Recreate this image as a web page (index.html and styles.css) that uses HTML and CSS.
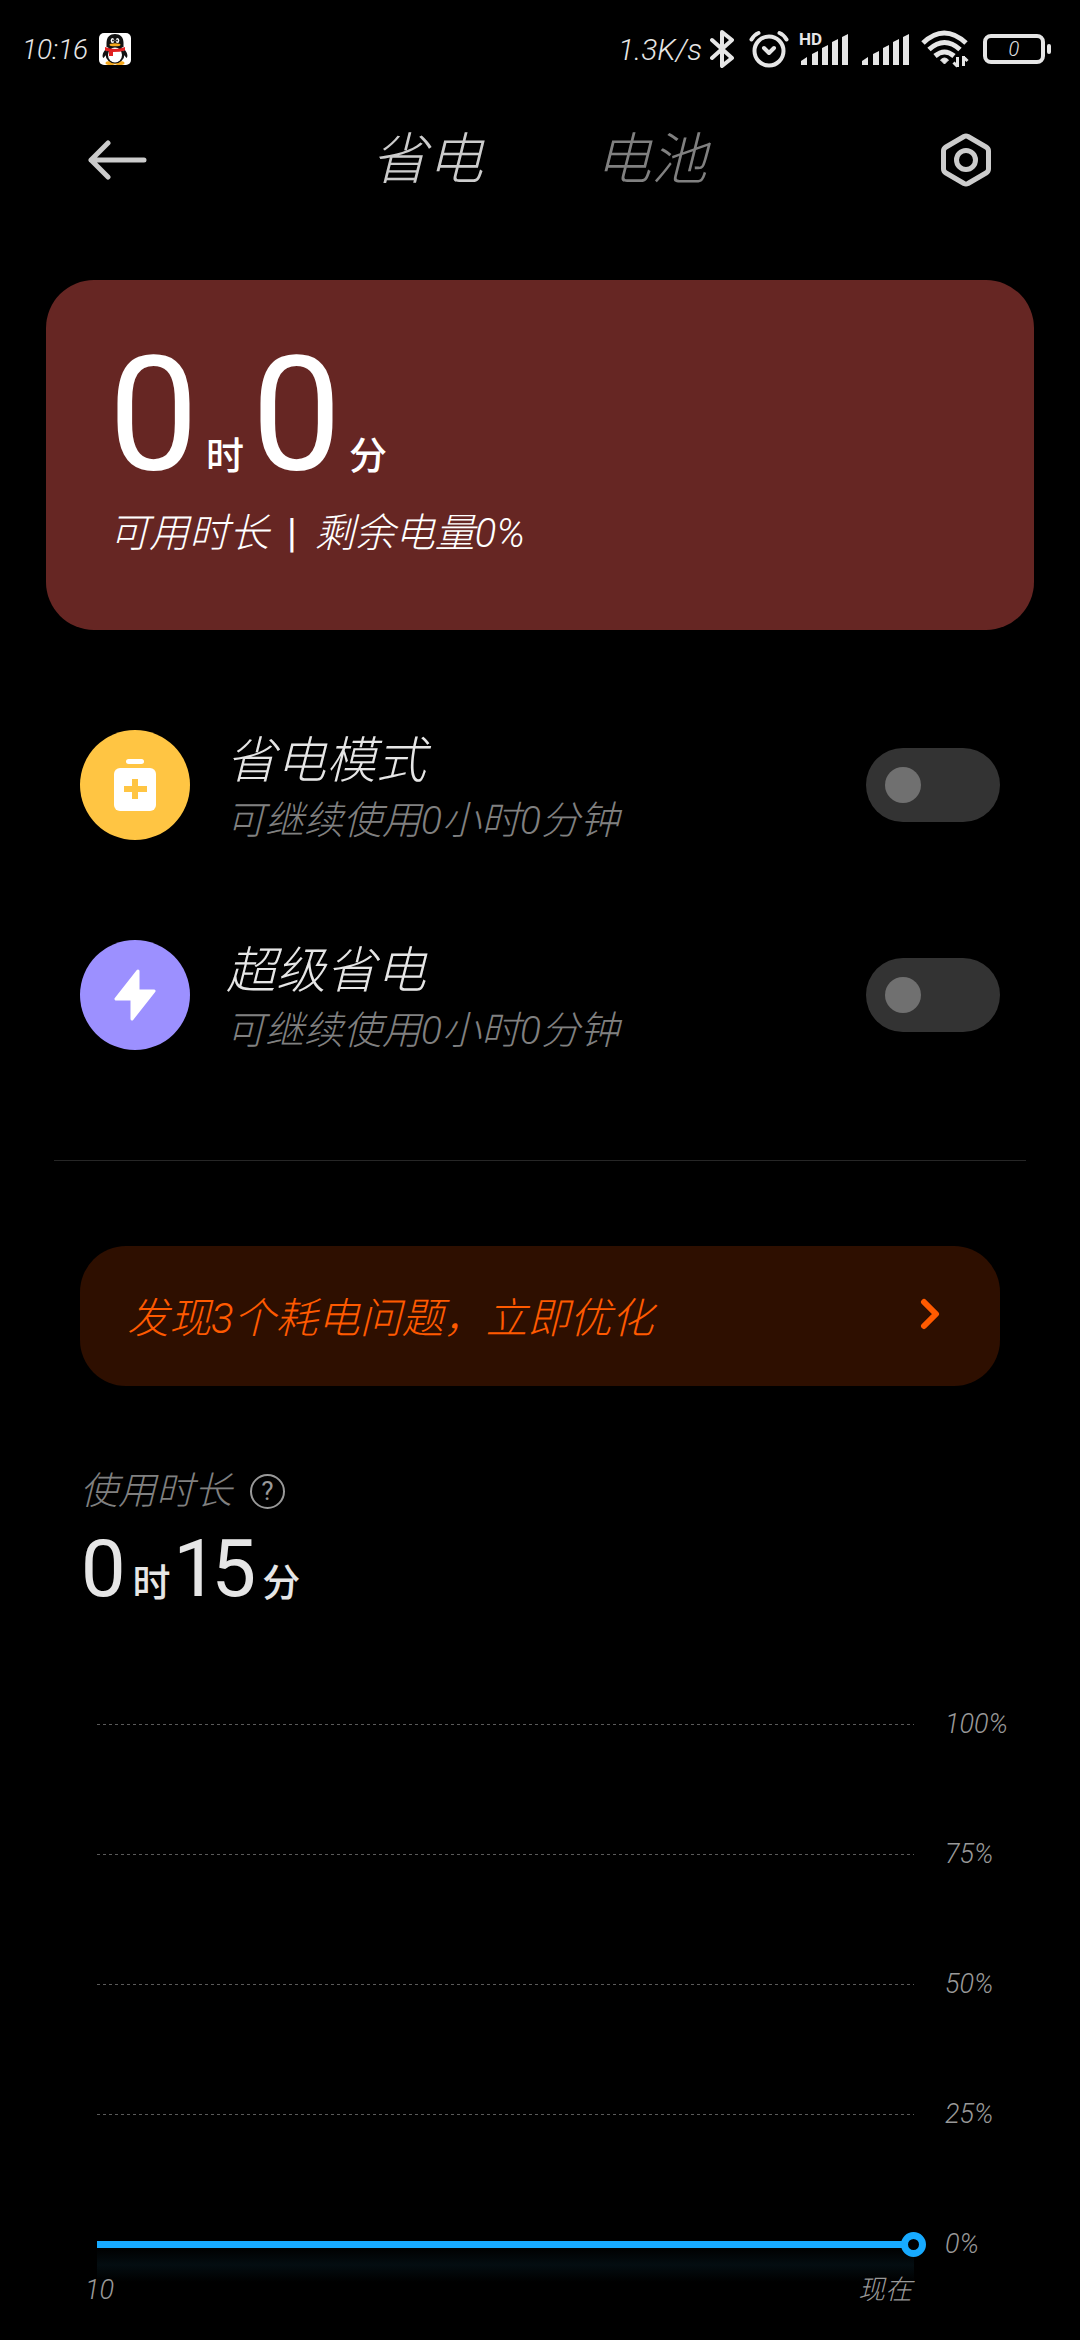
FILE: index.html
```html
<!DOCTYPE html>
<html lang="zh-CN">
<head>
    <meta charset="UTF-8">
    <meta name="viewport" content="width=device-width, initial-scale=1.0">
    <title>省电</title>
    <link rel="stylesheet" href="styles.css">
</head>
<body>
    <div class="status-bar">
        <div class="status-left">
            <span class="clock">10:16</span>
            <svg width="32" height="32" viewBox="0 0 32 32">
                <rect width="32" height="32" rx="5" fill="#fff"/>
                <ellipse cx="11.500" cy="30" rx="5" ry="2" fill="#f5a81c"/>
                <ellipse cx="20.500" cy="30" rx="5" ry="2" fill="#f5a81c"/>
                <path d="M7 16C3 20 3 24 4.500 25L7 22zM25 16C29 20 29 24 27.500 25L25 22z" fill="#111"/>
                <ellipse cx="16" cy="21" rx="9.500" ry="9.500" fill="#111"/>
                <ellipse cx="16" cy="22" rx="7" ry="7.500" fill="#fff"/>
                <path d="M7.500 14V10C7.500 4 11 1 16 1s8.500 3 8.500 9v4z" fill="#111"/>
                <ellipse cx="13.500" cy="7.500" rx="1.800" ry="2.600" fill="#fff"/>
                <ellipse cx="18.500" cy="7.500" rx="1.800" ry="2.600" fill="#fff"/>
                <circle cx="14" cy="7.500" r="0.900" fill="#111"/>
                <circle cx="18" cy="7.500" r="0.900" fill="#111"/>
                <ellipse cx="16" cy="11.700" rx="5.500" ry="1.500" fill="#f5a81c"/>
                <path d="M6 14q10 4 20 0v3.500q-5 1.500-12 1.500v4h-4v-4.500l-4-1z" fill="#e02020"/>
            </svg>
        </div>
        <div class="status-right">
            <span>1.3K/s</span>
            <svg class="bluetooth" width="24" height="38" viewBox="0 0 24 38" fill="none" stroke="#e6e6e6" stroke-width="4" stroke-linecap="round" stroke-linejoin="round">
                <path d="M2 10l20 18-10 8V2l10 8L2 28"/>
            </svg>
            <svg class="alarm" width="40" height="38" viewBox="0 0 40 38" fill="none" stroke="#e6e6e6" stroke-width="4" stroke-linecap="round" stroke-linejoin="round">
                <circle cx="20" cy="21" r="14.500"/>
                <path d="M15 18l5 5 5-5"/>
                <path d="M2.500 9.500q3-5 7-6.500M37.500 9.500q-3-5-7-6.500"/>
            </svg>
            <svg class="signal-one" width="50" height="46" viewBox="0 -6 50 46" fill="#e6e6e6">
                <text class="hd" x="0" y="13">HD</text>
                <path d="M2 33v-4l6-4v8zM13 33V22l6-3v14zM23 33V16l6-3v20zM33 33V10l6-3v26zM43 33V5l6-3v31z"/>
            </svg>
            <svg class="signal-two" width="50" height="34" viewBox="0 0 50 34" fill="#e6e6e6">
                <path d="M1 33v-4l6-4v8zM12 33V22l6-3v14zM22 33V16l6-3v20zM32 33V10l6-3v26zM42 33V5l6-3v31z"/>
            </svg>
            <svg class="wifi" width="48" height="38" viewBox="0 0 48 38" fill="none" stroke="#e6e6e6" stroke-width="5">
                <path d="M2 13q21-20 43 0"/>
                <path d="M8 19.500q15.500-14 31 0"/>
                <path d="M14 26q9.500-8 19 0"/>
                <path d="M23.500 34l-4-4q4-4 8 0z" fill="#e6e6e6" stroke-width="1"/>
                <path d="M36.500 27v10M42.500 26v10M32.500 32.500l4 4M42.500 27l4 4" stroke-width="3"/>
            </svg>
            <div class="battery"><span>0</span></div>
        </div>
    </div>

    <header class="top-bar">
        <button class="icon-button" type="button" aria-label="返回">
            <svg width="60" height="42" viewBox="0 0 60 42" fill="none" stroke="#ccc" stroke-width="5" stroke-linecap="round" stroke-linejoin="round">
                <path d="M20 4L3 21l17 17M3 21h53"/>
            </svg>
        </button>
        <nav class="tabs">
            <button class="tab active" type="button">省电</button>
            <button class="tab" type="button">电池</button>
        </nav>
        <button class="icon-button" type="button" aria-label="设置">
            <svg width="52" height="56" viewBox="0 0 52 56" fill="none" stroke="#ccc" stroke-width="5" stroke-linejoin="round">
                <path d="M24 4.500q2-1 4 0l18 10.500q2.500 1.500 2.500 4v18q0 2.500-2.500 4L28 51.500q-2 1-4 0L6 41q-2.500-1.500-2.500-4V19q0-2.500 2.500-4z"/>
                <circle cx="26" cy="28" r="9.500"/>
            </svg>
        </button>
    </header>

    <main>
        <section class="summary">
            <div class="duration duration-large">
                <span class="number">0</span><span class="unit">时</span><span class="number">0</span><span class="unit">分</span>
            </div>
            <p class="remaining">可用时长<span class="bar">|</span>剩余电量0%</p>
        </section>

        <section class="modes">
            <div class="mode">
                <svg width="110" height="110" viewBox="0 0 110 110">
                    <circle cx="55" cy="55" r="55" fill="#ffc543"/>
                    <rect x="46" y="29" width="18" height="5" rx="2.500" fill="#fff"/>
                    <rect x="34" y="38" width="42" height="43" rx="6" fill="#fff"/>
                    <path d="M55 49v20M44 59h23" stroke="#ffc543" stroke-width="6"/>
                </svg>
                <label class="mode-text" for="saver">
                    <span class="mode-title">省电模式</span>
                    <span class="mode-note">可继续使用0小时0分钟</span>
                </label>
                <input class="switch" type="checkbox" id="saver">
            </div>
            <div class="mode">
                <svg width="110" height="110" viewBox="0 0 110 110">
                    <circle cx="55" cy="55" r="55" fill="#9c90ff"/>
                    <path d="M58 31L36 59h16v20l22-28H58z" fill="#fff" stroke="#fff" stroke-width="3" stroke-linejoin="round"/>
                </svg>
                <label class="mode-text" for="ultra">
                    <span class="mode-title">超级省电</span>
                    <span class="mode-note">可继续使用0小时0分钟</span>
                </label>
                <input class="switch" type="checkbox" id="ultra">
            </div>
        </section>

        <section class="usage">
            <button class="issues" type="button">
                <span>发现3个耗电问题，立即优化</span>
                <svg width="20" height="32" viewBox="0 0 20 32" fill="none" stroke="#ff5a00" stroke-width="6" stroke-linecap="round" stroke-linejoin="round">
                    <path d="M4 4l12 12L4 28"/>
                </svg>
            </button>

            <div class="usage-head">
                <h2>使用时长</h2>
                <button class="help" type="button" aria-label="说明">?</button>
            </div>
            <div class="duration">
                <span class="number">0</span><span class="unit">时</span><span class="number">15</span><span class="unit">分</span>
            </div>

            <div class="chart">
                <div class="level"><i></i><span>100%</span></div>
                <div class="level"><i></i><span>75%</span></div>
                <div class="level"><i></i><span>50%</span></div>
                <div class="level"><i></i><span>25%</span></div>
                <div class="level current"><i></i><span>0%</span></div>
            </div>
            <div class="times">
                <span>10</span>
                <span>现在</span>
            </div>
        </section>
    </main>
</body>
</html>
```
FILE: styles.css
```css
*, *::before, *::after { box-sizing: border-box; }
body {
    margin: 0;
    background: #000;
    color: #e6e6e6;
    font-family: Roboto, "Noto Sans CJK SC", sans-serif;
    font-style: italic;
    font-weight: 300;
}
button { padding: 0; border: none; background: none; color: inherit; font: inherit; cursor: pointer; }
h2, p { margin: 0; font-weight: inherit; }
svg { display: block; flex-shrink: 0; }

/* status bar */
.status-bar { display: flex; justify-content: space-between; align-items: center; height: 98px; padding: 0 30px 0 22px; font-size: 30px; }
.status-left, .status-right { display: flex; align-items: center; }
.status-left { gap: 11px; }
.clock { font-size: 28px; }
.bluetooth { margin-left: 8px; }
.alarm { margin-left: 15px; }
.signal-one { margin-left: 10px; }
.signal-two { margin-left: 12px; }
.wifi { margin-left: 10px; }
.hd { font-size: 17px; font-weight: 700; font-style: normal; }
.battery { position: relative; display: flex; align-items: center; justify-content: center; width: 62px; height: 30px; margin: 0 5px 0 14px; border: 4px solid #e6e6e6; border-radius: 8px; font-size: 20px; }
.battery::after { content: ""; position: absolute; right: -10px; width: 4px; height: 10px; border-radius: 2px; background: #e6e6e6; }

/* top bar */
.top-bar { display: flex; justify-content: space-between; align-items: center; height: 124px; padding: 0 88px; }
.tabs { display: flex; gap: 112px; padding-right: 10px; }
.tab { font-size: 56px; line-height: 72px; color: #808080; }
.tab.active { color: #ccc; }

/* remaining time card */
.summary { margin: 58px 46px 0; padding: 54px 61px 66px; border-radius: 48px; background: #662623; color: #fff; }
.duration { display: flex; align-items: baseline; font-style: normal; font-weight: 400; }
.number { font-size: 80px; line-height: 82px; font-variant-numeric: proportional-nums; }
.unit { margin: 0 6px; font-size: 38px; line-height: 40px; font-weight: 500; }
.duration-large .number { font-size: 160px; line-height: 162px; }
.remaining { margin-top: 8px; padding-left: 2px; font-size: 40px; line-height: 60px; }
.bar { margin: 0 18px; font-style: normal; font-weight: 400; }

/* power modes */
.modes { display: flex; flex-direction: column; gap: 82px; margin: 0 54px; padding: 91px 26px 101px; border-bottom: 1px solid #262626; }
.mode { display: flex; align-items: center; }
.mode-text { display: flex; flex-direction: column; flex: 1; margin-left: 36px; padding-top: 8px; }
.mode-title { font-size: 50px; line-height: 64px; }
.mode-note { font-size: 39px; line-height: 56px; color: #808080; }
.switch { appearance: none; width: 134px; height: 74px; margin: 0; padding: 19px; border-radius: 37px; background: #333; cursor: pointer; }
.switch::before { content: ""; display: block; width: 36px; height: 36px; border-radius: 50%; background: #707070; }
.switch:checked { background: #0d84ff; }
.switch:checked::before { margin-left: auto; background: #fff; }

/* usage */
.usage { padding: 85px 80px 0; }
.issues { display: flex; justify-content: space-between; align-items: center; width: 100%; height: 140px; padding: 0 60px 4px 47px; border-radius: 46px; background: #2e0f00; color: #ff5a00; font-size: 42px; }
.usage-head { display: flex; align-items: center; gap: 18px; margin-top: 80px; color: #808080; }
.usage-head h2 { font-size: 38px; line-height: 50px; }
.help { width: 35px; height: 35px; border: 2px solid #999; border-radius: 50%; color: #999; font-size: 26px; line-height: 30px; font-style: normal; font-weight: 400; }
.usage .duration { margin-top: 12px; }

/* battery level chart */
.chart { display: flex; flex-direction: column; justify-content: space-between; height: 560px; margin: 94px -20px 0 17px; font-size: 27px; color: #999; }
.level { display: flex; align-items: center; height: 40px; }
.level i { flex: 1; height: 1px; background: repeating-linear-gradient(90deg, #5a5a5a 0 3px, transparent 3px 6px); }
.level span { width: 106px; padding-left: 31px; }
.current i { position: relative; height: 7px; background: #17aaff; }
.current i::before { content: ""; position: absolute; top: 7px; left: 0; right: 0; height: 34px; background: linear-gradient(#000, #040d11, #000); }
.current i::after { content: ""; position: absolute; top: -9px; right: -12px; width: 25px; height: 25px; border: 7px solid #17aaff; border-radius: 50%; background: #000; }
/* keeps the labels above the glow under the line */
.times { position: relative; display: flex; justify-content: space-between; margin: 6px 88px 0 5px; font-size: 27px; line-height: 40px; color: #999; }
```
